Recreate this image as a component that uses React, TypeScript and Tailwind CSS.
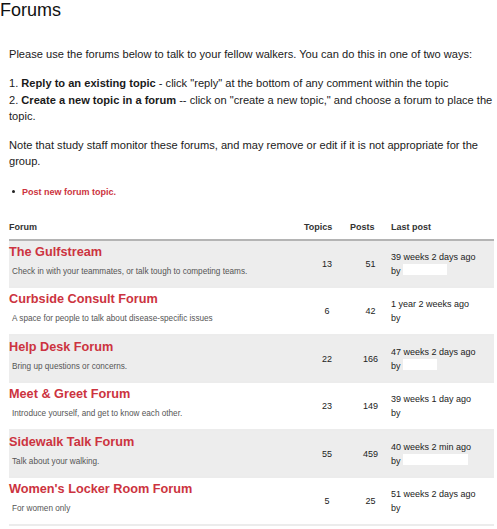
import React from "react";

type Row = {
  name: string;
  desc: string;
  topics: string;
  posts: string;
  last: string;
  box: string;
  gray: boolean;
};

const rows: Row[] = [
  { name: "The Gulfstream", desc: "Check in with your teammates, or talk tough to competing teams.", topics: "13", posts: "51", last: "39 weeks 2 days ago", box: "w-[44px]", gray: true },
  { name: "Curbside Consult Forum", desc: "A space for people to talk about disease-specific issues", topics: "6", posts: "42", last: "1 year 2 weeks ago", box: "w-[44px]", gray: false },
  { name: "Help Desk Forum", desc: "Bring up questions or concerns.", topics: "22", posts: "166", last: "47 weeks 2 days ago", box: "w-[34px]", gray: true },
  { name: "Meet & Greet Forum", desc: "Introduce yourself, and get to know each other.", topics: "23", posts: "149", last: "39 weeks 1 day ago", box: "w-[44px]", gray: false },
  { name: "Sidewalk Talk Forum", desc: "Talk about your walking.", topics: "55", posts: "459", last: "40 weeks 2 min ago", box: "w-[65px]", gray: true },
  { name: "Women's Locker Room Forum", desc: "For women only", topics: "5", posts: "25", last: "51 weeks 2 days ago", box: "w-[44px]", gray: false },
];

export default function App() {
  return (
    <div className="w-[497px] h-[529px] bg-white overflow-hidden text-[#1a1a1a] font-['Liberation_Sans',Arial,sans-serif]">
      <h1 className="m-0 text-[18px] leading-[21px] font-normal text-[#111]">Forums</h1>
      <div className="pl-[9px] pr-[2px]">
        <p className="mt-[25px] text-[11.1px] leading-[16.3px]">
          Please use the forums below to talk to your fellow walkers. You can do this in one of two ways:
        </p>
        <p className="mt-[13px] text-[11.1px] leading-[16.3px]">
          1. <b>Reply to an existing topic</b> - click "reply" at the bottom of any comment within the topic
          <br />
          2. <b>Create a new topic in a forum</b> -- click on "create a new topic," and choose a forum to place the topic.
        </p>
        <p className="mt-[13px] text-[11.1px] leading-[16.3px]">
          Note that study staff monitor these forums, and may remove or edit if it is not appropriate for the group.
        </p>
        <ul className="mt-[15px]">
          <li className="flex items-center text-[9px] leading-[14px] font-bold">
            <span className="ml-[3px] mr-[7px] w-[3px] h-[3px] rounded-full bg-[#222]" />
            <span className="text-[#cc3340]">Post new forum topic.</span>
          </li>
        </ul>

        <div className="mt-[16px] w-[485px]">
          <div className="grid grid-cols-[289px_46px_41px_109px] pt-[5px] pb-[5px] border-b-2 border-[#b4b4b4] text-[9px] leading-[14px] font-bold text-[#333]">
            <div>Forum</div>
            <div className="pl-[6px]">Topics</div>
            <div className="pl-[6px]">Posts</div>
            <div className="pl-[6px]">Last post</div>
          </div>
          {rows.map((r) => (
            <div
              key={r.name}
              className={
                "grid grid-cols-[289px_46px_41px_109px] h-[47.5px] border-b-2 border-[#ececec] " +
                (r.gray ? "bg-[#ededed]" : "bg-white")
              }
            >
              <div className="pt-[4px]">
                <div className="text-[12.7px] leading-[15px] font-bold text-[#cc3340]">{r.name}</div>
                <div className="mt-[7px] pl-[3px] text-[8.2px] leading-[10px] text-[#555]">{r.desc}</div>
              </div>
              <div className="flex items-center justify-center pl-[12px] text-[9px] leading-[14px] text-[#222]">
                {r.topics}
              </div>
              <div className="flex items-center justify-center pl-[12px] text-[9px] leading-[14px] text-[#222]">
                {r.posts}
              </div>
              <div className="flex flex-col justify-center pl-[6px] text-[9px] leading-[14px] text-[#222]">
                <div>{r.last}</div>
                <div>
                  by{" "}
                  <span className={"inline-block h-[11px] align-[-1px] bg-white " + r.box} />
                </div>
              </div>
            </div>
          ))}
        </div>
      </div>
    </div>
  );
}
